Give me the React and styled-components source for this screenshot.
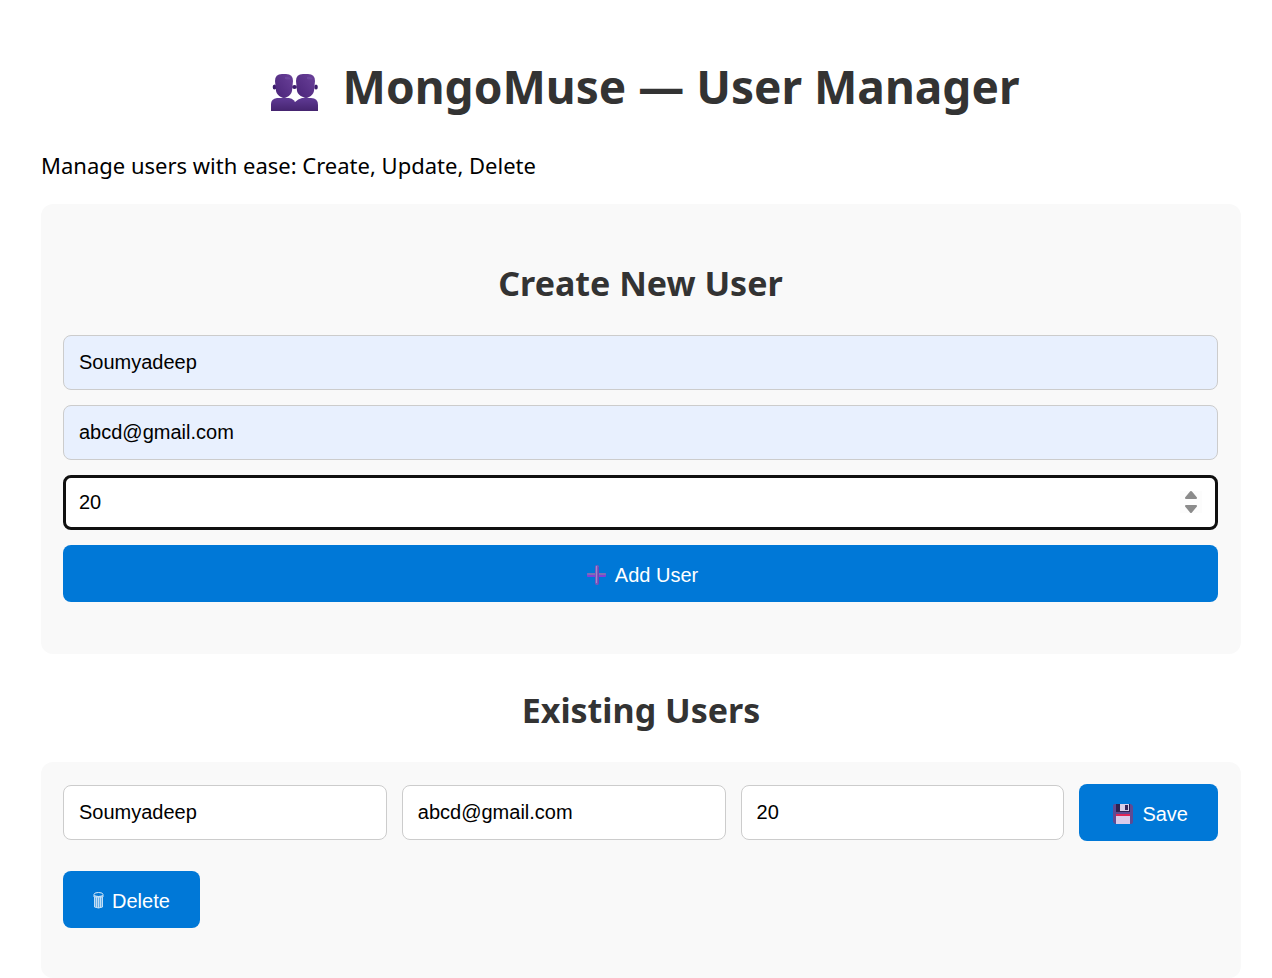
import React, { useState } from "react";
import styled, { createGlobalStyle, css } from "styled-components";

const GlobalStyle = createGlobalStyle`
  *, *::before, *::after { box-sizing: border-box; }
  body {
    margin: 0;
    background: #fff;
    color: #000;
    font-family: "Segoe UI", "Noto Sans", "Open Sans", sans-serif;
  }
`;

const Page = styled.main`
  padding: 54px 31px 0 41px;
`;

const Title = styled.h1`
  display: flex;
  align-items: center;
  justify-content: center;
  gap: 24px;
  margin: 0 0 31px;
  padding-left: 8px;
  color: #333;
  font-size: 46px;
  line-height: 64px;
  font-weight: 700;
  white-space: nowrap;

  svg { margin-top: 14px; }
`;

const Intro = styled.p`
  margin: 0 0 23px;
  font-size: 22px;
  line-height: 32px;
`;

const SectionTitle = styled.h2`
  margin: 0;
  color: #333;
  text-align: center;
  font-size: 34px;
  line-height: 48px;
  font-weight: 700;
`;

const Card = styled.section`
  padding: 22px 23px 50px 22px;
  border-radius: 12px;
  background: #f9f9f9;
`;

const CreateForm = styled.form`
  display: flex;
  flex-direction: column;
  gap: 15px;
  margin: 0;
  padding: 33px 0 2px;

  ${SectionTitle} { margin-bottom: 13px; }
`;

const UserRow = styled.form`
  display: flex;
  flex-wrap: wrap;
  align-items: center;
  gap: 30px 15px;
  margin: 0;
`;

const ExistingHeader = styled.header`
  padding: 32px 0 28px;
`;

const Input = styled.input`
  width: 100%;
  min-width: 0;
  height: 55px;
  margin: 0;
  padding: 0 15px;
  border: 1px solid #ccc;
  border-radius: 8px;
  outline: none;
  background: ${(p) => (p.$filled ? "#e8f0fe" : "#fff")};
  color: #000;
  font: 20px/24px "Liberation Sans", Arial, sans-serif;
  appearance: textfield;

  &::-webkit-inner-spin-button,
  &::-webkit-outer-spin-button {
    appearance: none;
    margin: 0;
  }

  ${(p) =>
    p.$active &&
    css`
      border: 3px solid #101010;
      padding: 0 13px;
    `}
`;

const RowInput = styled(Input)`
  flex: 1 1 300px;
  width: auto;
`;

const NumberField = styled.div`
  position: relative;
`;

const Spinner = styled.svg`
  position: absolute;
  top: 15px;
  right: 16px;
  pointer-events: none;
`;

const Button = styled.button`
  display: inline-flex;
  align-items: center;
  justify-content: center;
  gap: ${(p) => p.$gap || 8}px;
  height: 57px;
  padding: 2px 30px 0;
  border: 0;
  border-radius: 8px;
  background: #0078d7;
  color: #fff;
  font: 20px/24px "Liberation Sans", Arial, sans-serif;
  white-space: nowrap;
  cursor: pointer;
`;

function UsersIcon() {
  return (
    <svg width="48" height="38" viewBox="0 0 48 38" aria-hidden="true">
      <defs>
        <linearGradient id="head" x1="0" y1="1" x2="1" y2="0">
          <stop stopColor="#492378" />
          <stop offset="1" stopColor="#6a4199" />
        </linearGradient>
        <linearGradient id="bust" x1="0" y1="0" x2="0" y2="1">
          <stop stopColor="#5f3a94" />
          <stop offset="1" stopColor="#45246f" />
        </linearGradient>
      </defs>
      <path d="M24 37V28Q27 25 31 24H40Q47 24 47 31V37Z" fill="url(#bust)" />
      <path d="M0 37V30Q0 25 6 24H18Q24 25 25 31V37Z" fill="url(#bust)" />
      <g fill="#3b1c6b">
        <ellipse cx="3.500" cy="13" rx="1.800" ry="2.500" />
        <ellipse cx="23.500" cy="13" rx="2.500" ry="2" />
        <ellipse cx="45" cy="13" rx="1.800" ry="2.500" />
      </g>
      <path d="M4 7Q4 0 11 0H15Q22 0 22 7L21 17Q20 21 16 23Q13 25 10 23Q6 21 5 17Z" fill="url(#head)" />
      <path d="M25 7Q25 0 32 0H37Q44 0 44 7L43 17Q42 21 38 23Q35 25 32 23Q27 21 26 17Z" fill="url(#head)" />
      <path d="M14 3Q18 2 20 5Q17 6 14 5ZM36 3Q40 2 42 5Q39 6 36 5Z" fill="#7851a9" opacity=".5" />
    </svg>
  );
}

function PlusIcon() {
  return (
    <svg width="24" height="20" viewBox="-4 0 24 20" aria-hidden="true">
      <rect x="0" y="8" width="19" height="4" rx="1" fill="#8040d8" />
      <rect x="0" y="8" width="19" height="2" rx="1" fill="#7c6fb4" />
      <rect x="8" y="0" width="4" height="20" rx="2" fill="#7a58bd" />
      <rect x="9" y="1" width="1" height="17" fill="#a08bca" />
      <rect x="11" y="2" width="1" height="17" fill="#7043b8" />
    </svg>
  );
}

function SaveIcon() {
  return (
    <svg width="24" height="20" viewBox="-4 0 24 20" aria-hidden="true">
      <path d="M2 0H18L20 2V18Q20 20 18 20H2L0 18V2Q0 0 2 0Z" fill="#5f4a92" />
      <path d="M3 0H17V8H3Z" fill="#2d2150" />
      <path d="M7 0H16V7H7Z" fill="#d8cee7" />
      <path d="M12 1H15V6H12Z" fill="#35265b" />
      <path d="M3 10H17V12H3Z" fill="#df2455" />
      <path d="M3 12H17V20H3Z" fill="#dacbea" />
    </svg>
  );
}

function TrashIcon() {
  return (
    <svg width="11" height="17" viewBox="0 0 11 17" fill="none" aria-hidden="true">
      <path d="M1 4L2 15Q5.500 17 9 15L10 4Z" fill="#fff" fillOpacity=".4" />
      <ellipse cx="5.500" cy="2.500" rx="4.500" ry="2" stroke="#d9ebfa" />
      <path d="M1 3V5H10V3M1.500 5V15Q5.500 17 9.500 15V5M3.500 5V15M5.500 5V16M7.500 5V15" stroke="#c5dff5" />
    </svg>
  );
}

function SpinnerArrows() {
  return (
    <Spinner width="22" height="24" viewBox="0 0 22 24" aria-hidden="true">
      <rect width="22" height="22" y="1" fill="#fcfcfc" />
      <g fill="#8b8b8b" stroke="#8b8b8b" strokeWidth="2" strokeLinejoin="round">
        <path d="M11 2L16 8H6Z" />
        <path d="M11 22L16 16H6Z" />
      </g>
    </Spinner>
  );
}

function useUser() {
  const [user, setUser] = useState({
    name: "Soumyadeep",
    email: "abcd@gmail.com",
    age: "20",
  });
  return (key) => ({
    value: user[key],
    onChange: (e) => setUser({ ...user, [key]: e.target.value }),
  });
}

const stop = (e) => e.preventDefault();

export default function App() {
  const draft = useUser();
  const saved = useUser();
  return (
    <>
      <GlobalStyle />
      <Page>
        <Title>
          <UsersIcon />
          <span>MongoMuse — User Manager</span>
        </Title>
        <Intro>Manage users with ease: Create, Update, Delete</Intro>
        <Card>
          <CreateForm onSubmit={stop}>
            <SectionTitle>Create New User</SectionTitle>
            <Input $filled type="text" aria-label="Name" {...draft("name")} />
            <Input $filled type="email" aria-label="Email" {...draft("email")} />
            <NumberField>
              <Input $active type="number" aria-label="Age" {...draft("age")} />
              <SpinnerArrows />
            </NumberField>
            <Button type="submit">
              <PlusIcon />
              Add User
            </Button>
          </CreateForm>
        </Card>
        <ExistingHeader>
          <SectionTitle>Existing Users</SectionTitle>
        </ExistingHeader>
        <Card>
          <UserRow onSubmit={stop}>
            <RowInput type="text" aria-label="Name" {...saved("name")} />
            <RowInput type="email" aria-label="Email" {...saved("email")} />
            <RowInput type="number" aria-label="Age" {...saved("age")} />
            <Button type="submit" $gap={9}>
              <SaveIcon />
              Save
            </Button>
            <Button type="button">
              <TrashIcon />
              Delete
            </Button>
          </UserRow>
        </Card>
      </Page>
    </>
  );
}
